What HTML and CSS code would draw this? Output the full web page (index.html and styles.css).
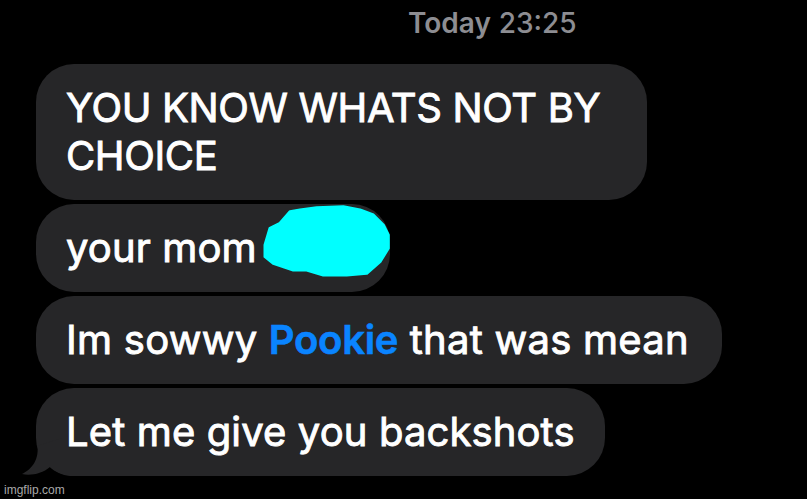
FILE: index.html
```html
<!DOCTYPE html>
<html lang="en">
<head>
<meta charset="utf-8">
<title>Messages</title>
<link rel="stylesheet" href="styles.css">
</head>
<body>
<main class="thread">
  <div class="stamp"><span class="stamp-day">Today</span> <span class="stamp-time">23:25</span></div>
  <div class="bubble bubble-wide">YOU KNOW WHATS NOT BY CHOICE</div>
  <div class="bubble bubble-censored">your mom <span class="hidden-bit"></span><svg class="blob" viewBox="0 0 128 72" width="128" height="72" aria-hidden="true"><path d="M27 6.7 L17 18.3 L7 23.3 L2 40 L2 51.7 L10.3 58.3 L30.3 65 L43.7 65 L60.3 70 L83.7 70 L103.7 68.3 L117 56.7 L125.3 43.3 L125.3 30 L120.3 20 L110.3 10 L97 5 L80.3 1.7 L53.7 2.7 L37 5 Z" fill="#0ff" stroke="#0ff" stroke-width="3" stroke-linejoin="round"/></svg></div>
  <div class="bubble bubble-long">Im sowwy <span class="link">Pookie</span> that was mean</div>
  <div class="bubble bubble-last">Let me give you backshots<svg class="tail" viewBox="-20 40 70 50" width="70" height="50" aria-hidden="true"><path d="M1.5 58 C3 74 -6 82 -14 86 C-6 88 6 86 14 79 C19 84 26 87 34 88 L40 88 L40 72 L26 72 L26 50 Z" fill="#262628"/></svg></div>
</main>
<div class="watermark">imgflip.com</div>
</body>
</html>
```
FILE: styles.css
```css
html, body {
  margin: 0;
  padding: 0;
  background: #000;
}
body {
  width: 807px;
  height: 499px;
  overflow: hidden;
  position: relative;
  font-family: Inter, "Liberation Sans", sans-serif;
}
.thread {
  display: flex;
  flex-direction: column;
  align-items: flex-start;
  gap: 4px;
  padding-left: 36px;
}
.stamp {
  height: 60px;
  box-sizing: border-box;
  padding: 3px 0 0 372px;
  font-size: 28px;
  line-height: 40px;
  color: #8d8d92;
}
.stamp-day { font-weight: 600; }
.stamp-time { font-weight: 500; }
.bubble {
  position: relative;
  box-sizing: border-box;
  max-width: 720px;
  padding: 20px 30px 20px 30px;
  border-radius: 38px;
  background: #262628;
  color: #fff;
  font-size: 40px;
  line-height: 48px;
  font-weight: 400;
  letter-spacing: 0.12px;
  -webkit-text-stroke: 0.9px #fff;
}
.bubble-wide {
  width: 611px;
  letter-spacing: -0.35px;
}
.bubble-long {
  padding-right: 33px;
  letter-spacing: 0.25px;
}
.link {
  color: #0a84ff;
  font-weight: 600;
  letter-spacing: -0.3px;
  -webkit-text-stroke: 0.6px #0a84ff;
}
.hidden-bit {
  display: inline-block;
  width: 92px;
  height: 10px;
}
.blob {
  position: absolute;
  left: 227px;
  top: 1px;
}
.tail {
  position: absolute;
  left: -20px;
  top: 40px;
  overflow: visible;
}
.watermark {
  position: absolute;
  left: 4px;
  bottom: 2px;
  font-family: "Liberation Sans", Arial, sans-serif;
  font-size: 12px;
  line-height: 14px;
  color: #a8a8a8;
}
```
